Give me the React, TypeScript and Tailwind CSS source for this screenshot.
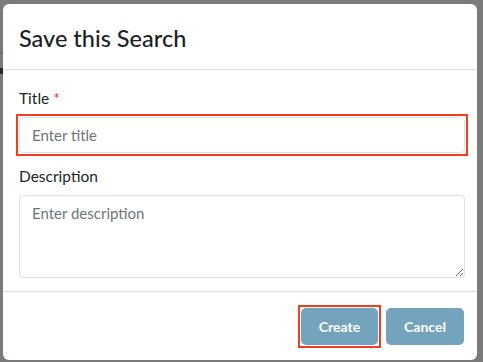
import React, { useState } from 'react';

function App() {
  const [title, setTitle] = useState('');
  const [description, setDescription] = useState('');

  return (
    <div
      className="w-[483px] h-[362px] bg-[#7b7b7b] overflow-hidden relative"
      style={{ fontFamily: 'Lato, "Noto Sans", sans-serif' }}
    >
      {/* bits of the page behind the overlay */}
      <div className="absolute left-0 top-[52px] w-[4px] h-[1px] bg-[#3c7a3c]" />
      <div className="absolute left-0 top-[68px] w-[3px] h-[6px] bg-[#2a2a2a]" />

      <div className="absolute left-[3px] top-[4px] w-[474px] h-[356px] bg-white rounded-[6px] flex flex-col">
        {/* Header */}
        <div className="h-[66px] shrink-0 flex items-center px-4 pt-[2px] border-b border-[#dee2e6]">
          <h4 className="text-[23.5px] leading-[30px] font-medium text-[#1c1f23]">
            Save this Search
          </h4>
        </div>

        {/* Body */}
        <div className="flex-1 pt-[16px] pl-[16px] pr-[12px] border-b border-[#dee2e6]">
          <label className="block text-[15.5px] leading-[24px] text-[#212529]">
            Title <span className="text-[#e03444]">*</span>
          </label>
          <div className="mt-[4px] -mx-[3px] border-2 border-[#f33d1d] p-px">
            <input
              type="text"
              value={title}
              onChange={(e) => setTitle(e.target.value)}
              placeholder="Enter title"
              className="block w-full h-[36px] px-3 rounded-[4px] border border-[#dee2e6] text-[15px] text-[#212529] placeholder:text-[#6c757d] outline-none"
            />
          </div>

          <label className="block mt-[8px] text-[15.5px] leading-[24px] text-[#212529]">
            Description
          </label>
          <textarea
            value={description}
            onChange={(e) => setDescription(e.target.value)}
            placeholder="Enter description"
            className="block mt-[7px] w-full h-[83px] px-3 py-[6px] rounded-[4px] border border-[#dee2e6] text-[15px] text-[#212529] placeholder:text-[#6c757d] outline-none"
          />
        </div>

        {/* Footer */}
        <div className="h-[68px] shrink-0 flex items-start justify-end gap-[2px] pt-[13px] pr-[10px]">
          <div className="border-2 border-[#f33d1d] p-px">
            <button className="w-[77px] h-[37px] rounded-[5px] bg-[#73a3bd] text-white text-[14px] font-bold">
              Create
            </button>
          </div>
          <div className="p-[3px]">
            <button className="w-[78px] h-[37px] rounded-[5px] bg-[#73a3bd] text-white text-[14px] font-bold">
              Cancel
            </button>
          </div>
        </div>
      </div>
    </div>
  );
}

export default App;
